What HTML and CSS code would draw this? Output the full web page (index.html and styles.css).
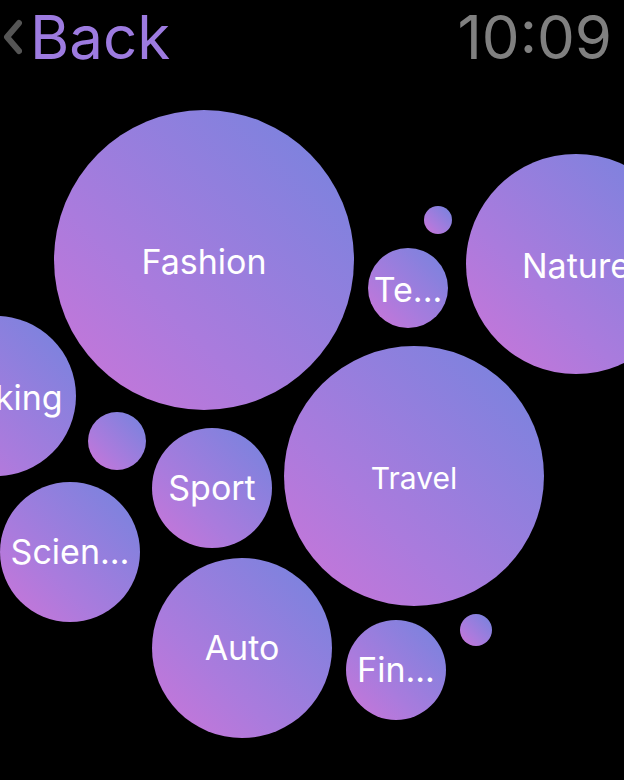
FILE: index.html
```html
<!DOCTYPE html>
<html lang="en">
<head>
<meta charset="utf-8">
<meta name="viewport" content="width=device-width, initial-scale=1">
<title>Topics</title>
<link rel="stylesheet" href="styles.css">
</head>
<body>
<header class="status-bar">
  <button class="back" type="button">
    <svg class="chevron" viewBox="0 0 20 36" aria-hidden="true"><path d="M17 4 5 18 17 32"/></svg>
    <span>Back</span>
  </button>
  <time class="clock">10:09</time>
</header>
<main class="canvas">
  <button class="bubble low fashion" type="button">Fashion</button>
  <button class="bubble low nature" type="button">Nature</button>
  <button class="bubble dot-top" type="button" aria-label="More"></button>
  <button class="bubble low tech" type="button">Te...</button>
  <button class="bubble low cooking" type="button">Cooking</button>
  <button class="bubble dot-left" type="button" aria-label="More"></button>
  <button class="bubble sport" type="button">Sport</button>
  <button class="bubble low travel" type="button">Travel</button>
  <button class="bubble science" type="button">Scien…</button>
  <button class="bubble auto" type="button">Auto</button>
  <button class="bubble finance" type="button">Fin...</button>
  <button class="bubble dot-right" type="button" aria-label="More"></button>
</main>
</body>
</html>
```

FILE: styles.css
```css
* { box-sizing: border-box; }

body {
  margin: 0;
  min-height: 100vh;
  display: flex;
  flex-direction: column;
  background: #000;
  color: #fff;
  font-family: Inter, Roboto, sans-serif;
  font-weight: 400;
}

button {
  margin: 0;
  padding: 0;
  border: 0;
  background: none;
  color: inherit;
  font: inherit;
  cursor: pointer;
}

.status-bar {
  display: flex;
  justify-content: space-between;
  align-items: center;
  padding: 0 12px 0 2px;
  font-size: 60px;
  line-height: 74px;
}

.back {
  display: flex;
  align-items: center;
  gap: 8px;
  color: #9d7be0;
}

.chevron {
  width: 20px;
  height: 36px;
  fill: none;
  stroke: #555;
  stroke-width: 6;
  stroke-linecap: round;
  stroke-linejoin: round;
}

.clock { color: #808080; }

/* Free canvas: each bubble carries its own place and diameter. */
.canvas {
  position: relative;
  flex: 1;
  overflow: hidden;
}

.bubble {
  position: absolute;
  width: var(--size);
  height: var(--size);
  border-radius: 50%;
  background: linear-gradient(45deg, #c576d9 8%, #aa7bdd 36%, #7883de 94%);
  font-size: 34px;
  line-height: 40px;
  text-align: center;
  white-space: nowrap;
}

.low { padding-top: 4px; }

.fashion { --size: 300px; left: 54px; top: 36px; }
.nature { --size: 220px; left: 466px; top: 80px; }
.dot-top { --size: 28px; left: 424px; top: 132px; }
.tech { --size: 80px; left: 368px; top: 174px; }
.cooking { --size: 160px; left: -84px; top: 242px; }
.dot-left { --size: 58px; left: 88px; top: 338px; }
.sport { --size: 120px; left: 152px; top: 354px; }
.travel { --size: 260px; left: 284px; top: 272px; font-size: 30px; }
.science { --size: 140px; left: 0; top: 408px; }
.auto { --size: 180px; left: 152px; top: 484px; }
.finance { --size: 100px; left: 346px; top: 546px; }
.dot-right { --size: 32px; left: 460px; top: 540px; }
```
